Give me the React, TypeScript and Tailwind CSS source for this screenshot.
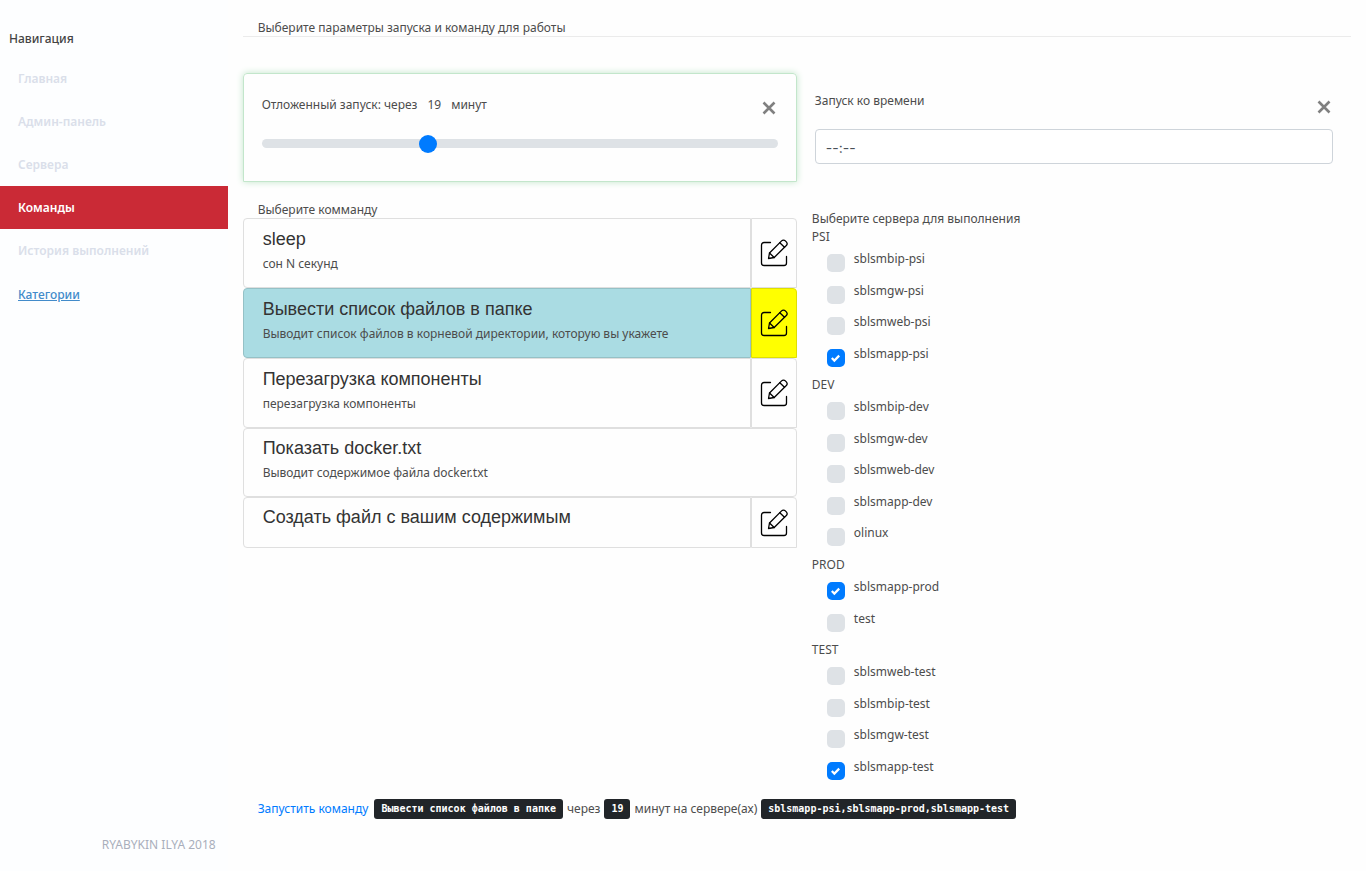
import { useState } from "react";
import type { ReactNode } from "react";
import clsx from "clsx";

const navItems = ["Главная", "Админ-панель", "Сервера", "Команды", "История выполнений"];

interface Command {
  title: string;
  description?: string;
  editable: boolean;
}

const commands: Command[] = [
  { title: "sleep", description: "сон N секунд", editable: true },
  {
    title: "Вывести список файлов в папке",
    description: "Выводит список файлов в корневой директории, которую вы укажете",
    editable: true,
  },
  { title: "Перезагрузка компоненты", description: "перезагрузка компоненты", editable: true },
  { title: "Показать docker.txt", description: "Выводит содержимое файла docker.txt", editable: false },
  { title: "Создать файл с вашим содержимым", editable: true },
];

const serverGroups = [
  { name: "PSI", servers: ["sblsmbip-psi", "sblsmgw-psi", "sblsmweb-psi", "sblsmapp-psi"] },
  { name: "DEV", servers: ["sblsmbip-dev", "sblsmgw-dev", "sblsmweb-dev", "sblsmapp-dev", "olinux"] },
  { name: "PROD", servers: ["sblsmapp-prod", "test"] },
  { name: "TEST", servers: ["sblsmweb-test", "sblsmbip-test", "sblsmgw-test", "sblsmapp-test"] },
];

function CloseIcon() {
  return (
    <svg viewBox="0 0 14 14" className="size-[14px]" fill="none" stroke="currentColor" strokeWidth="2.6">
      <path d="M1.500 1.500l11 11M12.500 1.500l-11 11" />
    </svg>
  );
}

function EditIcon() {
  return (
    <svg
      viewBox="0 0 28 28"
      className="size-7"
      fill="none"
      stroke="currentColor"
      strokeWidth="1.3"
      strokeLinejoin="round"
      strokeLinecap="round"
    >
      <path d="M10.500 3.500H4A2.500 2.500 0 0 0 1.500 6V24A2.500 2.500 0 0 0 4 26.500H24A2.500 2.500 0 0 0 26.500 24V17.500" />
      <path d="M8.500 19.500L9.500 14L21.600 1.900A2.600 2.600 0 0 1 25.300 1.900L26.300 2.900A2.600 2.600 0 0 1 26.300 6.500L14.200 18.500Z" />
      <path d="M9.500 14L14.200 18.500M19.800 3.700L24.500 8.300" />
    </svg>
  );
}

function Code({ children }: { children: ReactNode }) {
  return (
    <kbd className="rounded-[3px] bg-[#212529] px-[7px] font-['DejaVu_Sans_Mono','Liberation_Mono',monospace] text-[10px] leading-5 font-bold text-white">
      {children}
    </kbd>
  );
}

function Sidebar() {
  return (
    <aside className="flex w-1/6 shrink-0 flex-col bg-[#fdfeff] pt-[29px] pb-4">
      <h2 className="px-[9px] leading-5 font-medium text-[#444]">Навигация</h2>
      <nav className="mt-2 flex flex-col">
        {navItems.map((item) => (
          <a
            key={item}
            href="#"
            className={clsx(
              "px-[18px] leading-[43px] font-semibold",
              item === "Команды" ? "bg-[#ca2a36] text-white" : "text-[#dadfea]",
            )}
          >
            {item}
          </a>
        ))}
        <a href="#" className="px-[18px] leading-[45px] font-medium text-[#428bca] underline">
          Категории
        </a>
      </nav>
      <footer className="mt-auto pr-3 text-right leading-5 text-[#a9aebb]">RYABYKIN ILYA 2018</footer>
    </aside>
  );
}

export default function App() {
  const [minutes, setMinutes] = useState(19);
  const [time, setTime] = useState("--:--");
  const [selected, setSelected] = useState(1);
  const [checked, setChecked] = useState(["sblsmapp-psi", "sblsmapp-prod", "sblsmapp-test"]);

  const toggle = (server: string) =>
    setChecked((list) => (list.includes(server) ? list.filter((s) => s !== server) : [...list, server]));

  return (
    <div className="flex min-h-screen bg-[#fefefe] font-['Noto_Sans','Open_Sans',sans-serif] text-[12px] leading-[18px] text-[#4c4c4c]">
      <Sidebar />
      <main className="min-w-0 grow px-[15px] pt-[19px] pb-6">
        <h1 className="border-b border-[#ebebeb] px-[15px] leading-[17px]">
          Выберите параметры запуска и команду для работы
        </h1>

        <div className="mt-9 grid grid-cols-2">
          <div>
            <section className="h-[109px] rounded-t border border-[#c3e6cb] px-[18px] pt-[22px] shadow-[0_0_7px_#c3e6cb]">
              <div className="flex items-start justify-between">
                <label htmlFor="delay" className="flex gap-[10px]">
                  <span>Отложенный запуск: через</span>
                  <span>{minutes}</span>
                  <span>минут</span>
                </label>
                <button type="button" aria-label="Сбросить задержку" className="mt-[5px] mr-[2px] text-[#808080]">
                  <CloseIcon />
                </button>
              </div>
              <input
                id="delay"
                type="range"
                min={0}
                max={60}
                value={minutes}
                onChange={(e) => setMinutes(Number(e.target.value))}
                className="mt-[19px] block h-[18px] w-full appearance-none bg-transparent [&::-webkit-slider-runnable-track]:h-[9px] [&::-webkit-slider-runnable-track]:rounded-full [&::-webkit-slider-runnable-track]:bg-[#dee2e6] [&::-webkit-slider-thumb]:-mt-1 [&::-webkit-slider-thumb]:size-[18px] [&::-webkit-slider-thumb]:appearance-none [&::-webkit-slider-thumb]:rounded-full [&::-webkit-slider-thumb]:bg-[#007bff]"
              />
            </section>

            <h2 className="mt-5 px-[15px] leading-4">Выберите комманду</h2>
            <ul>
              {commands.map((command, i) => {
                const active = i === selected;
                return (
                  <li key={command.title} className="flex">
                    <button
                      type="button"
                      onClick={() => setSelected(i)}
                      className={clsx(
                        "min-w-0 grow rounded-l border px-[19px] pt-2 pb-[14px] text-left",
                        !command.editable && "rounded-r",
                        active ? "border-[#95c1c6] bg-[#aadce3]" : "border-[#dfdfdf]",
                      )}
                    >
                      <span className="block font-['Liberation_Sans',Arial,sans-serif] text-[18px] leading-[22px] text-[#333]">
                        {command.title}
                      </span>
                      {command.description ? (
                        <span className="mt-[5px] block leading-[18px]">{command.description}</span>
                      ) : (
                        <span className="block h-[5px]" />
                      )}
                    </button>
                    {command.editable && (
                      <button
                        type="button"
                        aria-label={`Редактировать: ${command.title}`}
                        className={clsx(
                          "flex min-h-[51px] w-[46px] shrink-0 items-center justify-center rounded-tr border text-black",
                          command.description && "min-h-[70px]",
                          active ? "border-[#dfdf00] bg-[#ffff00]" : "border-[#dfdfdf]",
                        )}
                      >
                        <EditIcon />
                      </button>
                    )}
                  </li>
                );
              })}
            </ul>
          </div>

          <div className="pl-[15px]">
            <section className="pt-[19px] pr-[18px] pl-[3px]">
              <div className="flex items-start justify-between">
                <label htmlFor="time">Запуск ко времени</label>
                <button type="button" aria-label="Сбросить время" className="mt-2 mr-[2px] text-[#808080]">
                  <CloseIcon />
                </button>
              </div>
              <input
                id="time"
                type="text"
                value={time}
                onChange={(e) => setTime(e.target.value)}
                className="mt-[15px] block h-[35px] w-full rounded border border-[#ced4da] bg-white px-[10px] pt-[2px] font-['Inter','Noto_Sans',sans-serif] text-[14px] text-[#495057]"
              />
            </section>

            <section className="mt-[46px]">
              <h2>Выберите сервера для выполнения</h2>
              {serverGroups.map((group) => (
                <fieldset key={group.name}>
                  <legend className="h-[22px]">{group.name}</legend>
                  <div className="pl-[15px]">
                    {group.servers.map((server) => (
                      <label key={server} className="flex h-8 items-start gap-[9px] even:h-[31px]">
                        <span className="mt-1 grid size-[18px]">
                          <input
                            type="checkbox"
                            checked={checked.includes(server)}
                            onChange={() => toggle(server)}
                            className="peer col-start-1 row-start-1 size-[18px] appearance-none rounded-[5px] bg-[#dee2e6] checked:bg-[#007bff]"
                          />
                          <svg
                            viewBox="0 0 8 8"
                            className="pointer-events-none invisible col-start-1 row-start-1 size-[9px] place-self-center peer-checked:visible"
                            fill="#fff"
                          >
                            <path d="M6.564.75l-3.590 3.612-1.538-1.550L0 4.260 2.974 7.250 8 2.193z" />
                          </svg>
                        </span>
                        <span>{server}</span>
                      </label>
                    ))}
                  </div>
                </fieldset>
              ))}
            </section>
          </div>
        </div>

        <div className="mt-[10px] flex flex-wrap items-center gap-1 px-[15px]">
          <a href="#" className="mr-[2px] text-[#007bff]">
            Запустить команду
          </a>
          <Code>{commands[selected].title}</Code>
          <span>через</span>
          <Code>{minutes}</Code>
          <span>минут на сервере(ах)</span>
          <Code>{checked.join(",")}</Code>
        </div>
      </main>
    </div>
  );
}
